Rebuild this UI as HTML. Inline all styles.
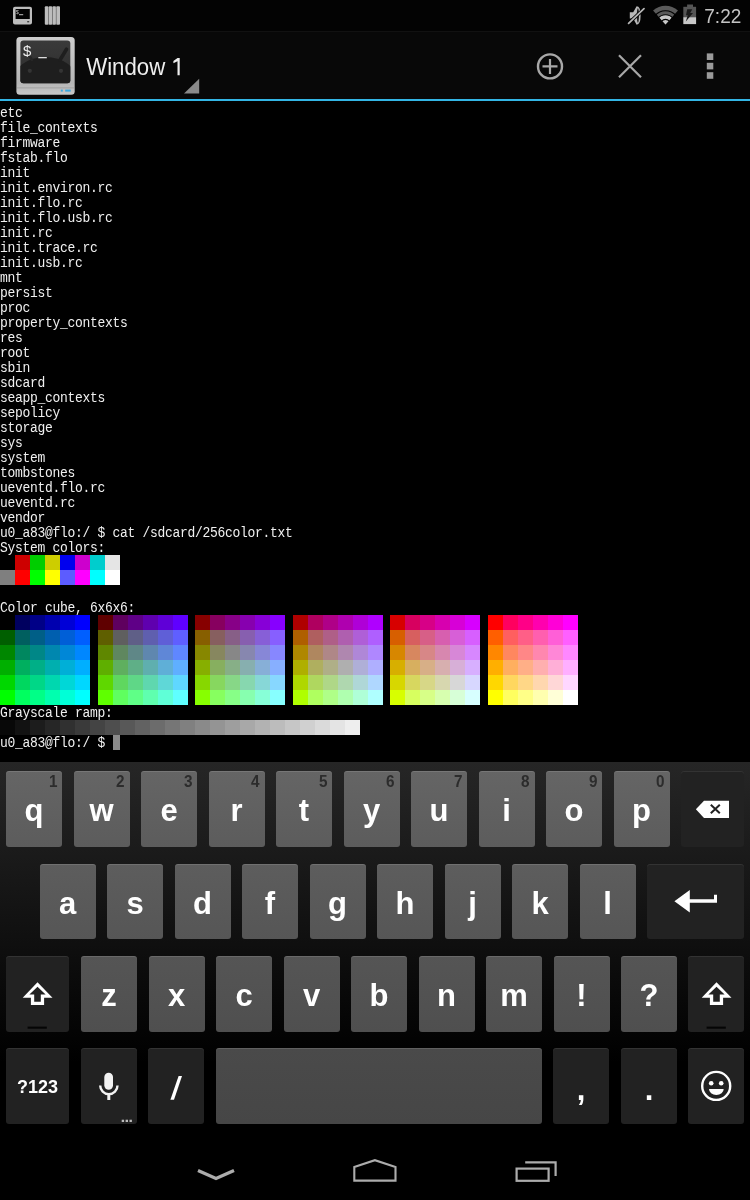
<!DOCTYPE html>
<html><head><meta charset="utf-8"><style>
*{margin:0;padding:0;box-sizing:border-box}
html,body{width:750px;height:1200px;background:#000;overflow:hidden;position:relative}
body{will-change:transform}
body{font-family:"Liberation Sans",sans-serif}
.a{position:absolute}
svg{position:absolute;overflow:visible}
.t{position:absolute;left:0;font-family:"Liberation Mono",monospace;font-size:13px;letter-spacing:-0.3px;line-height:15px;height:15px;color:#f0f0f0;white-space:pre;transform:scaleY(1.08);transform-origin:0 10.5px}
.c{position:absolute;width:15px;height:15px}
.k{position:absolute;border-radius:3px;box-shadow:inset 0 1px 0 rgba(255,255,255,0.12)}
.f{position:absolute;border-radius:3px;background:#222;box-shadow:inset 0 1px 0 rgba(255,255,255,0.08)}
.l{position:absolute;left:0;right:0;text-align:center;color:#fff;font-weight:bold;font-size:31px;line-height:1}
.n{position:absolute;right:5px;top:2px;color:#2c2c2c;font-size:17px;font-weight:bold;line-height:1;transform:scaleX(0.9);transform-origin:100% 0}
</style></head><body>
<div class="a" style="left:0;top:0;width:750px;height:31px;background:#030303"></div>
<div class="a" style="left:0;top:32px;width:750px;height:67px;background:#080808"></div>

<svg style="left:0;top:0" width="750" height="32">
 <g fill="#bdbdbd">
  <path fill-rule="evenodd" d="M15 6.8h15a2 2 0 0 1 2 2v13.6a2 2 0 0 1-2 2h-15a2 2 0 0 1-2-2v-13.6a2 2 0 0 1 2-2zM15.6 9v10h14.2v-10z"/>
 </g>
 <rect x="27.2" y="21" width="2" height="1.4" fill="#444"/>
 <text x="15.7" y="13.6" font-family="Liberation Sans" font-size="5.6" fill="#bdbdbd">$</text>
 <rect x="19" y="14.2" width="4.2" height="1" fill="#bdbdbd"/>
 <rect x="0" y="31" width="750" height="1" fill="#111"/>
 <g fill="#bdbdbd">
  <rect x="44.8" y="6.3" width="3.6" height="18.5" rx="1"/>
  <rect x="48.6" y="6.3" width="3.6" height="18.5" rx="1"/>
  <rect x="52.4" y="6.3" width="3.6" height="18.5" rx="1"/>
  <rect x="56.2" y="6.3" width="3.8" height="18.5" rx="1"/>
 </g>
 <g fill="#7a7a7a">
  <rect x="48.2" y="7" width="0.6" height="17.5"/><rect x="52" y="7" width="0.6" height="17.5"/><rect x="55.8" y="7" width="0.6" height="17.5"/>
 </g>
 <!-- mute -->
 <path d="M629.8 12.2H633.2L636.6 6.2Q640.6 6.2 640.6 15.5Q640.6 24.7 636.6 24.7L633.2 18.6H629.8Z" fill="#b8b8b8"/>
 <ellipse cx="637.9" cy="15.5" rx="1.1" ry="7.3" fill="#1c1c1c"/>
 <line x1="628.6" y1="23.3" x2="644" y2="8.7" stroke="#000" stroke-width="3.4"/>
 <line x1="628.6" y1="23.3" x2="644" y2="8.7" stroke="#b5b5b5" stroke-width="1.8" stroke-linecap="round"/>
 <!-- wifi -->
 <path d="M665.5 24.4L653.05 10.58A18.6 18.6 0 0 1 677.95 10.58Z" fill="#5a5a5a"/><path d="M655.01 15.59A13.7 13.7 0 0 1 675.99 15.59" stroke="#000" stroke-width="1.1" fill="none"/><path d="M665.5 24.4L659.08 17.27A9.6 9.6 0 0 1 671.92 17.27Z" fill="#c9c9c9"/><path d="M658.15 18.23A9.6 9.6 0 0 1 672.85 18.23" stroke="#000" stroke-width="1.1" fill="none"/><path d="M661.67 21.19A5.0 5.0 0 0 1 669.33 21.19" stroke="#000" stroke-width="1.1" fill="none"/>
 <!-- battery -->
 <rect x="687.1" y="4.5" width="5.9" height="2.5" fill="#555"/>
 <rect x="683.3" y="6.8" width="12.8" height="10.5" fill="#555"/>
 <rect x="683.3" y="17.2" width="12.8" height="6.9" fill="#c8c8c8"/>
 <path d="M687.2 9.3H692.3L690.2 13H693L685.8 21.6L687.8 15.2H686Z" fill="#1a1a1a"/>
 <text x="704.3" y="22.8" font-family="Liberation Sans" font-size="20.5" fill="#c4c4c4" textLength="37" lengthAdjust="spacingAndGlyphs">7:22</text>
</svg>


<svg style="left:0;top:32px" width="220" height="67" viewBox="0 32 220 67">
 <defs>
  <linearGradient id="bz" x1="0" y1="0" x2="0" y2="1"><stop offset="0" stop-color="#cfcfcf"/><stop offset="0.8" stop-color="#b5b5b5"/><stop offset="1" stop-color="#c8c8c8"/></linearGradient>
  <linearGradient id="sc" x1="0" y1="0" x2="0" y2="1"><stop offset="0" stop-color="#3a3a3a"/><stop offset="1" stop-color="#2c2c2c"/></linearGradient>
 </defs>
 <rect x="16.4" y="36.9" width="58.3" height="57.8" rx="3.5" fill="url(#bz)"/>
 <clipPath id="scr"><rect x="20.4" y="40.5" width="49.9" height="42.7" rx="3"/></clipPath>
 <rect x="20.4" y="40.5" width="49.9" height="42.7" rx="3" fill="url(#sc)"/>
 <g clip-path="url(#scr)">
  <ellipse cx="45.3" cy="81" rx="32" ry="24" fill="#1e1e1e"/>
  <path d="M66.5 49.2L60 60" stroke="#1e1e1e" stroke-width="3.6" stroke-linecap="round"/>
  <path d="M27 52L32 60" stroke="#262626" stroke-width="2.5" stroke-linecap="round"/>
  <circle cx="29.8" cy="70.8" r="2.1" fill="#343434"/>
  <circle cx="61" cy="70.8" r="2.1" fill="#343434"/>
 </g>
 <text x="23" y="55.5" font-family="Liberation Sans" font-size="15" fill="#eee">$</text>
 <rect x="38.3" y="57" width="8.5" height="1.3" fill="#ddd"/>
 <rect x="17" y="87.5" width="57" height="0.8" fill="#9a9a9a"/>
 <rect x="60.8" y="89.6" width="2" height="2" fill="#39a7e0"/>
 <rect x="65.2" y="89.6" width="5.5" height="2" fill="#39a7e0"/>
 <text x="86.2" y="75.3" font-family="Liberation Sans" font-size="23.5" fill="#eeeeee" textLength="79" lengthAdjust="spacingAndGlyphs">Window</text>
 <path d="M177.5 58H179.7V75.3H177.5V61.2L173.4 63.2V61Z" fill="#eeeeee"/>
 <path d="M199.2 78.8V93.5H184Z" fill="#8a8a8a"/>
</svg>


<svg style="left:0;top:32px" width="750" height="67" viewBox="0 32 750 67">
 <circle cx="550" cy="66.4" r="12" stroke="#a8a8a8" stroke-width="2.4" fill="none"/>
 <path d="M542.5 66.4h15M550 58.9v15" stroke="#a8a8a8" stroke-width="2.2"/>
 <path d="M619 55.2L641 77.2M641 55.2L619 77.2" stroke="#a8a8a8" stroke-width="2.2"/>
 <rect x="706.8" y="53.4" width="6.5" height="6.6" fill="#9a9a9a"/>
 <rect x="706.8" y="62.8" width="6.5" height="6.6" fill="#9a9a9a"/>
 <rect x="706.8" y="72.2" width="6.5" height="6.6" fill="#9a9a9a"/>
</svg>

<div class="a" style="left:0;top:99px;width:750px;height:2px;background:#33b5e5"></div>
<div class="t" style="top:106px">etc</div><div class="t" style="top:121px">file_contexts</div><div class="t" style="top:136px">firmware</div><div class="t" style="top:151px">fstab.flo</div><div class="t" style="top:166px">init</div><div class="t" style="top:181px">init.environ.rc</div><div class="t" style="top:196px">init.flo.rc</div><div class="t" style="top:211px">init.flo.usb.rc</div><div class="t" style="top:226px">init.rc</div><div class="t" style="top:241px">init.trace.rc</div><div class="t" style="top:256px">init.usb.rc</div><div class="t" style="top:271px">mnt</div><div class="t" style="top:286px">persist</div><div class="t" style="top:301px">proc</div><div class="t" style="top:316px">property_contexts</div><div class="t" style="top:331px">res</div><div class="t" style="top:346px">root</div><div class="t" style="top:361px">sbin</div><div class="t" style="top:376px">sdcard</div><div class="t" style="top:391px">seapp_contexts</div><div class="t" style="top:406px">sepolicy</div><div class="t" style="top:421px">storage</div><div class="t" style="top:436px">sys</div><div class="t" style="top:451px">system</div><div class="t" style="top:466px">tombstones</div><div class="t" style="top:481px">ueventd.flo.rc</div><div class="t" style="top:496px">ueventd.rc</div><div class="t" style="top:511px">vendor</div><div class="t" style="top:526px">u0_a83@flo:/ $ cat /sdcard/256color.txt</div><div class="t" style="top:541px">System colors:</div><div class="t" style="top:601px">Color cube, 6x6x6:</div><div class="t" style="top:706px">Grayscale ramp:</div><div class="t" style="top:736px">u0_a83@flo:/ $ </div><div class="c" style="left:0px;top:555px;background:#000000"></div><div class="c" style="left:15px;top:555px;background:#cd0000"></div><div class="c" style="left:30px;top:555px;background:#00cd00"></div><div class="c" style="left:45px;top:555px;background:#cdcd00"></div><div class="c" style="left:60px;top:555px;background:#0000ee"></div><div class="c" style="left:75px;top:555px;background:#cd00cd"></div><div class="c" style="left:90px;top:555px;background:#00cdcd"></div><div class="c" style="left:105px;top:555px;background:#e5e5e5"></div><div class="c" style="left:0px;top:570px;background:#7f7f7f"></div><div class="c" style="left:15px;top:570px;background:#ff0000"></div><div class="c" style="left:30px;top:570px;background:#00ff00"></div><div class="c" style="left:45px;top:570px;background:#ffff00"></div><div class="c" style="left:60px;top:570px;background:#5c5cff"></div><div class="c" style="left:75px;top:570px;background:#ff00ff"></div><div class="c" style="left:90px;top:570px;background:#00ffff"></div><div class="c" style="left:105px;top:570px;background:#ffffff"></div><div class="c" style="left:0.0px;top:615px;background:#000000"></div><div class="c" style="left:15.0px;top:615px;background:#00005f"></div><div class="c" style="left:30.0px;top:615px;background:#000087"></div><div class="c" style="left:45.0px;top:615px;background:#0000af"></div><div class="c" style="left:60.0px;top:615px;background:#0000d7"></div><div class="c" style="left:75.0px;top:615px;background:#0000ff"></div><div class="c" style="left:97.5px;top:615px;background:#5f0000"></div><div class="c" style="left:112.5px;top:615px;background:#5f005f"></div><div class="c" style="left:127.5px;top:615px;background:#5f0087"></div><div class="c" style="left:142.5px;top:615px;background:#5f00af"></div><div class="c" style="left:157.5px;top:615px;background:#5f00d7"></div><div class="c" style="left:172.5px;top:615px;background:#5f00ff"></div><div class="c" style="left:195.0px;top:615px;background:#870000"></div><div class="c" style="left:210.0px;top:615px;background:#87005f"></div><div class="c" style="left:225.0px;top:615px;background:#870087"></div><div class="c" style="left:240.0px;top:615px;background:#8700af"></div><div class="c" style="left:255.0px;top:615px;background:#8700d7"></div><div class="c" style="left:270.0px;top:615px;background:#8700ff"></div><div class="c" style="left:292.5px;top:615px;background:#af0000"></div><div class="c" style="left:307.5px;top:615px;background:#af005f"></div><div class="c" style="left:322.5px;top:615px;background:#af0087"></div><div class="c" style="left:337.5px;top:615px;background:#af00af"></div><div class="c" style="left:352.5px;top:615px;background:#af00d7"></div><div class="c" style="left:367.5px;top:615px;background:#af00ff"></div><div class="c" style="left:390.0px;top:615px;background:#d70000"></div><div class="c" style="left:405.0px;top:615px;background:#d7005f"></div><div class="c" style="left:420.0px;top:615px;background:#d70087"></div><div class="c" style="left:435.0px;top:615px;background:#d700af"></div><div class="c" style="left:450.0px;top:615px;background:#d700d7"></div><div class="c" style="left:465.0px;top:615px;background:#d700ff"></div><div class="c" style="left:487.5px;top:615px;background:#ff0000"></div><div class="c" style="left:502.5px;top:615px;background:#ff005f"></div><div class="c" style="left:517.5px;top:615px;background:#ff0087"></div><div class="c" style="left:532.5px;top:615px;background:#ff00af"></div><div class="c" style="left:547.5px;top:615px;background:#ff00d7"></div><div class="c" style="left:562.5px;top:615px;background:#ff00ff"></div><div class="c" style="left:0.0px;top:630px;background:#005f00"></div><div class="c" style="left:15.0px;top:630px;background:#005f5f"></div><div class="c" style="left:30.0px;top:630px;background:#005f87"></div><div class="c" style="left:45.0px;top:630px;background:#005faf"></div><div class="c" style="left:60.0px;top:630px;background:#005fd7"></div><div class="c" style="left:75.0px;top:630px;background:#005fff"></div><div class="c" style="left:97.5px;top:630px;background:#5f5f00"></div><div class="c" style="left:112.5px;top:630px;background:#5f5f5f"></div><div class="c" style="left:127.5px;top:630px;background:#5f5f87"></div><div class="c" style="left:142.5px;top:630px;background:#5f5faf"></div><div class="c" style="left:157.5px;top:630px;background:#5f5fd7"></div><div class="c" style="left:172.5px;top:630px;background:#5f5fff"></div><div class="c" style="left:195.0px;top:630px;background:#875f00"></div><div class="c" style="left:210.0px;top:630px;background:#875f5f"></div><div class="c" style="left:225.0px;top:630px;background:#875f87"></div><div class="c" style="left:240.0px;top:630px;background:#875faf"></div><div class="c" style="left:255.0px;top:630px;background:#875fd7"></div><div class="c" style="left:270.0px;top:630px;background:#875fff"></div><div class="c" style="left:292.5px;top:630px;background:#af5f00"></div><div class="c" style="left:307.5px;top:630px;background:#af5f5f"></div><div class="c" style="left:322.5px;top:630px;background:#af5f87"></div><div class="c" style="left:337.5px;top:630px;background:#af5faf"></div><div class="c" style="left:352.5px;top:630px;background:#af5fd7"></div><div class="c" style="left:367.5px;top:630px;background:#af5fff"></div><div class="c" style="left:390.0px;top:630px;background:#d75f00"></div><div class="c" style="left:405.0px;top:630px;background:#d75f5f"></div><div class="c" style="left:420.0px;top:630px;background:#d75f87"></div><div class="c" style="left:435.0px;top:630px;background:#d75faf"></div><div class="c" style="left:450.0px;top:630px;background:#d75fd7"></div><div class="c" style="left:465.0px;top:630px;background:#d75fff"></div><div class="c" style="left:487.5px;top:630px;background:#ff5f00"></div><div class="c" style="left:502.5px;top:630px;background:#ff5f5f"></div><div class="c" style="left:517.5px;top:630px;background:#ff5f87"></div><div class="c" style="left:532.5px;top:630px;background:#ff5faf"></div><div class="c" style="left:547.5px;top:630px;background:#ff5fd7"></div><div class="c" style="left:562.5px;top:630px;background:#ff5fff"></div><div class="c" style="left:0.0px;top:645px;background:#008700"></div><div class="c" style="left:15.0px;top:645px;background:#00875f"></div><div class="c" style="left:30.0px;top:645px;background:#008787"></div><div class="c" style="left:45.0px;top:645px;background:#0087af"></div><div class="c" style="left:60.0px;top:645px;background:#0087d7"></div><div class="c" style="left:75.0px;top:645px;background:#0087ff"></div><div class="c" style="left:97.5px;top:645px;background:#5f8700"></div><div class="c" style="left:112.5px;top:645px;background:#5f875f"></div><div class="c" style="left:127.5px;top:645px;background:#5f8787"></div><div class="c" style="left:142.5px;top:645px;background:#5f87af"></div><div class="c" style="left:157.5px;top:645px;background:#5f87d7"></div><div class="c" style="left:172.5px;top:645px;background:#5f87ff"></div><div class="c" style="left:195.0px;top:645px;background:#878700"></div><div class="c" style="left:210.0px;top:645px;background:#87875f"></div><div class="c" style="left:225.0px;top:645px;background:#878787"></div><div class="c" style="left:240.0px;top:645px;background:#8787af"></div><div class="c" style="left:255.0px;top:645px;background:#8787d7"></div><div class="c" style="left:270.0px;top:645px;background:#8787ff"></div><div class="c" style="left:292.5px;top:645px;background:#af8700"></div><div class="c" style="left:307.5px;top:645px;background:#af875f"></div><div class="c" style="left:322.5px;top:645px;background:#af8787"></div><div class="c" style="left:337.5px;top:645px;background:#af87af"></div><div class="c" style="left:352.5px;top:645px;background:#af87d7"></div><div class="c" style="left:367.5px;top:645px;background:#af87ff"></div><div class="c" style="left:390.0px;top:645px;background:#d78700"></div><div class="c" style="left:405.0px;top:645px;background:#d7875f"></div><div class="c" style="left:420.0px;top:645px;background:#d78787"></div><div class="c" style="left:435.0px;top:645px;background:#d787af"></div><div class="c" style="left:450.0px;top:645px;background:#d787d7"></div><div class="c" style="left:465.0px;top:645px;background:#d787ff"></div><div class="c" style="left:487.5px;top:645px;background:#ff8700"></div><div class="c" style="left:502.5px;top:645px;background:#ff875f"></div><div class="c" style="left:517.5px;top:645px;background:#ff8787"></div><div class="c" style="left:532.5px;top:645px;background:#ff87af"></div><div class="c" style="left:547.5px;top:645px;background:#ff87d7"></div><div class="c" style="left:562.5px;top:645px;background:#ff87ff"></div><div class="c" style="left:0.0px;top:660px;background:#00af00"></div><div class="c" style="left:15.0px;top:660px;background:#00af5f"></div><div class="c" style="left:30.0px;top:660px;background:#00af87"></div><div class="c" style="left:45.0px;top:660px;background:#00afaf"></div><div class="c" style="left:60.0px;top:660px;background:#00afd7"></div><div class="c" style="left:75.0px;top:660px;background:#00afff"></div><div class="c" style="left:97.5px;top:660px;background:#5faf00"></div><div class="c" style="left:112.5px;top:660px;background:#5faf5f"></div><div class="c" style="left:127.5px;top:660px;background:#5faf87"></div><div class="c" style="left:142.5px;top:660px;background:#5fafaf"></div><div class="c" style="left:157.5px;top:660px;background:#5fafd7"></div><div class="c" style="left:172.5px;top:660px;background:#5fafff"></div><div class="c" style="left:195.0px;top:660px;background:#87af00"></div><div class="c" style="left:210.0px;top:660px;background:#87af5f"></div><div class="c" style="left:225.0px;top:660px;background:#87af87"></div><div class="c" style="left:240.0px;top:660px;background:#87afaf"></div><div class="c" style="left:255.0px;top:660px;background:#87afd7"></div><div class="c" style="left:270.0px;top:660px;background:#87afff"></div><div class="c" style="left:292.5px;top:660px;background:#afaf00"></div><div class="c" style="left:307.5px;top:660px;background:#afaf5f"></div><div class="c" style="left:322.5px;top:660px;background:#afaf87"></div><div class="c" style="left:337.5px;top:660px;background:#afafaf"></div><div class="c" style="left:352.5px;top:660px;background:#afafd7"></div><div class="c" style="left:367.5px;top:660px;background:#afafff"></div><div class="c" style="left:390.0px;top:660px;background:#d7af00"></div><div class="c" style="left:405.0px;top:660px;background:#d7af5f"></div><div class="c" style="left:420.0px;top:660px;background:#d7af87"></div><div class="c" style="left:435.0px;top:660px;background:#d7afaf"></div><div class="c" style="left:450.0px;top:660px;background:#d7afd7"></div><div class="c" style="left:465.0px;top:660px;background:#d7afff"></div><div class="c" style="left:487.5px;top:660px;background:#ffaf00"></div><div class="c" style="left:502.5px;top:660px;background:#ffaf5f"></div><div class="c" style="left:517.5px;top:660px;background:#ffaf87"></div><div class="c" style="left:532.5px;top:660px;background:#ffafaf"></div><div class="c" style="left:547.5px;top:660px;background:#ffafd7"></div><div class="c" style="left:562.5px;top:660px;background:#ffafff"></div><div class="c" style="left:0.0px;top:675px;background:#00d700"></div><div class="c" style="left:15.0px;top:675px;background:#00d75f"></div><div class="c" style="left:30.0px;top:675px;background:#00d787"></div><div class="c" style="left:45.0px;top:675px;background:#00d7af"></div><div class="c" style="left:60.0px;top:675px;background:#00d7d7"></div><div class="c" style="left:75.0px;top:675px;background:#00d7ff"></div><div class="c" style="left:97.5px;top:675px;background:#5fd700"></div><div class="c" style="left:112.5px;top:675px;background:#5fd75f"></div><div class="c" style="left:127.5px;top:675px;background:#5fd787"></div><div class="c" style="left:142.5px;top:675px;background:#5fd7af"></div><div class="c" style="left:157.5px;top:675px;background:#5fd7d7"></div><div class="c" style="left:172.5px;top:675px;background:#5fd7ff"></div><div class="c" style="left:195.0px;top:675px;background:#87d700"></div><div class="c" style="left:210.0px;top:675px;background:#87d75f"></div><div class="c" style="left:225.0px;top:675px;background:#87d787"></div><div class="c" style="left:240.0px;top:675px;background:#87d7af"></div><div class="c" style="left:255.0px;top:675px;background:#87d7d7"></div><div class="c" style="left:270.0px;top:675px;background:#87d7ff"></div><div class="c" style="left:292.5px;top:675px;background:#afd700"></div><div class="c" style="left:307.5px;top:675px;background:#afd75f"></div><div class="c" style="left:322.5px;top:675px;background:#afd787"></div><div class="c" style="left:337.5px;top:675px;background:#afd7af"></div><div class="c" style="left:352.5px;top:675px;background:#afd7d7"></div><div class="c" style="left:367.5px;top:675px;background:#afd7ff"></div><div class="c" style="left:390.0px;top:675px;background:#d7d700"></div><div class="c" style="left:405.0px;top:675px;background:#d7d75f"></div><div class="c" style="left:420.0px;top:675px;background:#d7d787"></div><div class="c" style="left:435.0px;top:675px;background:#d7d7af"></div><div class="c" style="left:450.0px;top:675px;background:#d7d7d7"></div><div class="c" style="left:465.0px;top:675px;background:#d7d7ff"></div><div class="c" style="left:487.5px;top:675px;background:#ffd700"></div><div class="c" style="left:502.5px;top:675px;background:#ffd75f"></div><div class="c" style="left:517.5px;top:675px;background:#ffd787"></div><div class="c" style="left:532.5px;top:675px;background:#ffd7af"></div><div class="c" style="left:547.5px;top:675px;background:#ffd7d7"></div><div class="c" style="left:562.5px;top:675px;background:#ffd7ff"></div><div class="c" style="left:0.0px;top:690px;background:#00ff00"></div><div class="c" style="left:15.0px;top:690px;background:#00ff5f"></div><div class="c" style="left:30.0px;top:690px;background:#00ff87"></div><div class="c" style="left:45.0px;top:690px;background:#00ffaf"></div><div class="c" style="left:60.0px;top:690px;background:#00ffd7"></div><div class="c" style="left:75.0px;top:690px;background:#00ffff"></div><div class="c" style="left:97.5px;top:690px;background:#5fff00"></div><div class="c" style="left:112.5px;top:690px;background:#5fff5f"></div><div class="c" style="left:127.5px;top:690px;background:#5fff87"></div><div class="c" style="left:142.5px;top:690px;background:#5fffaf"></div><div class="c" style="left:157.5px;top:690px;background:#5fffd7"></div><div class="c" style="left:172.5px;top:690px;background:#5fffff"></div><div class="c" style="left:195.0px;top:690px;background:#87ff00"></div><div class="c" style="left:210.0px;top:690px;background:#87ff5f"></div><div class="c" style="left:225.0px;top:690px;background:#87ff87"></div><div class="c" style="left:240.0px;top:690px;background:#87ffaf"></div><div class="c" style="left:255.0px;top:690px;background:#87ffd7"></div><div class="c" style="left:270.0px;top:690px;background:#87ffff"></div><div class="c" style="left:292.5px;top:690px;background:#afff00"></div><div class="c" style="left:307.5px;top:690px;background:#afff5f"></div><div class="c" style="left:322.5px;top:690px;background:#afff87"></div><div class="c" style="left:337.5px;top:690px;background:#afffaf"></div><div class="c" style="left:352.5px;top:690px;background:#afffd7"></div><div class="c" style="left:367.5px;top:690px;background:#afffff"></div><div class="c" style="left:390.0px;top:690px;background:#d7ff00"></div><div class="c" style="left:405.0px;top:690px;background:#d7ff5f"></div><div class="c" style="left:420.0px;top:690px;background:#d7ff87"></div><div class="c" style="left:435.0px;top:690px;background:#d7ffaf"></div><div class="c" style="left:450.0px;top:690px;background:#d7ffd7"></div><div class="c" style="left:465.0px;top:690px;background:#d7ffff"></div><div class="c" style="left:487.5px;top:690px;background:#ffff00"></div><div class="c" style="left:502.5px;top:690px;background:#ffff5f"></div><div class="c" style="left:517.5px;top:690px;background:#ffff87"></div><div class="c" style="left:532.5px;top:690px;background:#ffffaf"></div><div class="c" style="left:547.5px;top:690px;background:#ffffd7"></div><div class="c" style="left:562.5px;top:690px;background:#ffffff"></div><div class="c" style="left:0px;top:720px;background:#080808"></div><div class="c" style="left:15px;top:720px;background:#121212"></div><div class="c" style="left:30px;top:720px;background:#1c1c1c"></div><div class="c" style="left:45px;top:720px;background:#262626"></div><div class="c" style="left:60px;top:720px;background:#303030"></div><div class="c" style="left:75px;top:720px;background:#3a3a3a"></div><div class="c" style="left:90px;top:720px;background:#444444"></div><div class="c" style="left:105px;top:720px;background:#4e4e4e"></div><div class="c" style="left:120px;top:720px;background:#585858"></div><div class="c" style="left:135px;top:720px;background:#626262"></div><div class="c" style="left:150px;top:720px;background:#6c6c6c"></div><div class="c" style="left:165px;top:720px;background:#767676"></div><div class="c" style="left:180px;top:720px;background:#808080"></div><div class="c" style="left:195px;top:720px;background:#8a8a8a"></div><div class="c" style="left:210px;top:720px;background:#949494"></div><div class="c" style="left:225px;top:720px;background:#9e9e9e"></div><div class="c" style="left:240px;top:720px;background:#a8a8a8"></div><div class="c" style="left:255px;top:720px;background:#b2b2b2"></div><div class="c" style="left:270px;top:720px;background:#bcbcbc"></div><div class="c" style="left:285px;top:720px;background:#c6c6c6"></div><div class="c" style="left:300px;top:720px;background:#d0d0d0"></div><div class="c" style="left:315px;top:720px;background:#dadada"></div><div class="c" style="left:330px;top:720px;background:#e4e4e4"></div><div class="c" style="left:345px;top:720px;background:#eeeeee"></div><div class="a" style="left:112.5px;top:735px;width:7.5px;height:15px;background:#8a8a8a"></div>
<div class="a" style="left:0;top:762px;width:750px;height:376px;background:linear-gradient(#262626,#000 80%)"></div>
<div class="k" style="left:6.0px;top:771px;width:56px;height:75.5px;background:linear-gradient(#656565,#5c5c5c)"><div class="n">1</div><div class="l" style="top:24px">q</div></div><div class="k" style="left:73.5px;top:771px;width:56px;height:75.5px;background:linear-gradient(#656565,#5c5c5c)"><div class="n">2</div><div class="l" style="top:24px">w</div></div><div class="k" style="left:141.0px;top:771px;width:56px;height:75.5px;background:linear-gradient(#656565,#5c5c5c)"><div class="n">3</div><div class="l" style="top:24px">e</div></div><div class="k" style="left:208.5px;top:771px;width:56px;height:75.5px;background:linear-gradient(#656565,#5c5c5c)"><div class="n">4</div><div class="l" style="top:24px">r</div></div><div class="k" style="left:276.0px;top:771px;width:56px;height:75.5px;background:linear-gradient(#656565,#5c5c5c)"><div class="n">5</div><div class="l" style="top:24px">t</div></div><div class="k" style="left:343.5px;top:771px;width:56px;height:75.5px;background:linear-gradient(#656565,#5c5c5c)"><div class="n">6</div><div class="l" style="top:24px">y</div></div><div class="k" style="left:411.0px;top:771px;width:56px;height:75.5px;background:linear-gradient(#656565,#5c5c5c)"><div class="n">7</div><div class="l" style="top:24px">u</div></div><div class="k" style="left:478.5px;top:771px;width:56px;height:75.5px;background:linear-gradient(#656565,#5c5c5c)"><div class="n">8</div><div class="l" style="top:24px">i</div></div><div class="k" style="left:546.0px;top:771px;width:56px;height:75.5px;background:linear-gradient(#656565,#5c5c5c)"><div class="n">9</div><div class="l" style="top:24px">o</div></div><div class="k" style="left:613.5px;top:771px;width:56px;height:75.5px;background:linear-gradient(#656565,#5c5c5c)"><div class="n">0</div><div class="l" style="top:24px">p</div></div><div class="f" style="left:681px;top:771px;width:63px;height:75.5px"></div><div class="k" style="left:39.5px;top:863.5px;width:56px;height:75.5px;background:linear-gradient(#5d5d5d,#565656)"><div class="l" style="top:24px">a</div></div><div class="k" style="left:107.0px;top:863.5px;width:56px;height:75.5px;background:linear-gradient(#5d5d5d,#565656)"><div class="l" style="top:24px">s</div></div><div class="k" style="left:174.5px;top:863.5px;width:56px;height:75.5px;background:linear-gradient(#5d5d5d,#565656)"><div class="l" style="top:24px">d</div></div><div class="k" style="left:242.0px;top:863.5px;width:56px;height:75.5px;background:linear-gradient(#5d5d5d,#565656)"><div class="l" style="top:24px">f</div></div><div class="k" style="left:309.5px;top:863.5px;width:56px;height:75.5px;background:linear-gradient(#5d5d5d,#565656)"><div class="l" style="top:24px">g</div></div><div class="k" style="left:377.0px;top:863.5px;width:56px;height:75.5px;background:linear-gradient(#5d5d5d,#565656)"><div class="l" style="top:24px">h</div></div><div class="k" style="left:444.5px;top:863.5px;width:56px;height:75.5px;background:linear-gradient(#5d5d5d,#565656)"><div class="l" style="top:24px">j</div></div><div class="k" style="left:512.0px;top:863.5px;width:56px;height:75.5px;background:linear-gradient(#5d5d5d,#565656)"><div class="l" style="top:24px">k</div></div><div class="k" style="left:579.5px;top:863.5px;width:56px;height:75.5px;background:linear-gradient(#5d5d5d,#565656)"><div class="l" style="top:24px">l</div></div><div class="f" style="left:647px;top:863.5px;width:97px;height:75.5px"></div><div class="f" style="left:6px;top:956px;width:63px;height:75.5px"></div><div class="k" style="left:81.0px;top:956px;width:56px;height:75.5px;background:linear-gradient(#555555,#4f4f4f)"><div class="l" style="top:24px">z</div></div><div class="k" style="left:148.5px;top:956px;width:56px;height:75.5px;background:linear-gradient(#555555,#4f4f4f)"><div class="l" style="top:24px">x</div></div><div class="k" style="left:216.0px;top:956px;width:56px;height:75.5px;background:linear-gradient(#555555,#4f4f4f)"><div class="l" style="top:24px">c</div></div><div class="k" style="left:283.5px;top:956px;width:56px;height:75.5px;background:linear-gradient(#555555,#4f4f4f)"><div class="l" style="top:24px">v</div></div><div class="k" style="left:351.0px;top:956px;width:56px;height:75.5px;background:linear-gradient(#555555,#4f4f4f)"><div class="l" style="top:24px">b</div></div><div class="k" style="left:418.5px;top:956px;width:56px;height:75.5px;background:linear-gradient(#555555,#4f4f4f)"><div class="l" style="top:24px">n</div></div><div class="k" style="left:486.0px;top:956px;width:56px;height:75.5px;background:linear-gradient(#555555,#4f4f4f)"><div class="l" style="top:24px">m</div></div><div class="k" style="left:553.5px;top:956px;width:56px;height:75.5px;background:linear-gradient(#555555,#4f4f4f)"><div class="l" style="top:24px">!</div></div><div class="k" style="left:621.0px;top:956px;width:56px;height:75.5px;background:linear-gradient(#555555,#4f4f4f)"><div class="l" style="top:24px">?</div></div><div class="f" style="left:688px;top:956px;width:56px;height:75.5px"></div><div class="f" style="left:6px;top:1048px;width:63px;height:75.5px"><div class="l" style="top:30px;font-size:18px">?123</div></div><div class="f" style="left:81px;top:1048px;width:56px;height:75.5px"></div><div class="f" style="left:148px;top:1048px;width:56px;height:75.5px"></div><div class="k" style="left:216px;top:1048px;width:326px;height:75.5px;background:linear-gradient(#4a4a4a,#464646)"></div><div class="f" style="left:553px;top:1048px;width:56px;height:75.5px"><div class="l" style="top:26px">,</div></div><div class="f" style="left:621px;top:1048px;width:56px;height:75.5px"><div class="l" style="top:26px">.</div></div><div class="f" style="left:688px;top:1048px;width:56px;height:75.5px"></div>

<svg style="left:0;top:762px" width="750" height="376" viewBox="0 762 750 376">
 <path d="M178.6 1076H182L174 1099.8H170.4Z" fill="#fff"/>
 <path d="M695.9 809.3L704 800.8H729V817.9H704Z" fill="#fff"/>
 <path d="M710.8 804.8L719.8 813.2M719.8 804.8L710.8 813.2" stroke="#222" stroke-width="2"/>
 <path d="M674.4 901.2L689.8 890V899.2H714V894.8H717V902.8H689.8V912.4Z" fill="#fff"/>
 <path d="M37.5 982.2L52.5 997.8H44.1V1005H30.9V997.8H22.7Z M37.5 986.7L29.4 994.5H34.2V1001.7H40.8V994.5H45.6Z" fill="#fff" fill-rule="evenodd"/>
 <rect x="27.6" y="1026.6" width="19.2" height="2.1" fill="#050505"/>
 <path d="M716.5 982.2L731.5 997.8H723.1V1005H709.9V997.8H701.7Z M716.5 986.7L708.4 994.5H713.2V1001.7H719.8V994.5H724.6Z" fill="#fff" fill-rule="evenodd"/>
 <rect x="706.6" y="1026.6" width="19.2" height="2.1" fill="#050505"/>
 <rect x="104.3" y="1072.7" width="8.7" height="17" rx="4.35" fill="#f2f2f2"/>
 <path d="M100.2 1085.5A8.45 8.45 0 0 0 117.5 1085.5" stroke="#f2f2f2" stroke-width="2.4" fill="none"/>
 <rect x="107.3" y="1093" width="3" height="7" fill="#f2f2f2"/>
 <rect x="121.7" y="1119.7" width="2.4" height="2.3" fill="#bbb"/>
 <rect x="125.6" y="1119.7" width="2.4" height="2.3" fill="#bbb"/>
 <rect x="129.5" y="1119.7" width="2.4" height="2.3" fill="#bbb"/>
 <circle cx="716.2" cy="1085.9" r="14" stroke="#fff" stroke-width="2.4" fill="none"/>
 <circle cx="711.2" cy="1083.3" r="2.3" fill="#fff"/>
 <circle cx="721.2" cy="1083.3" r="2.3" fill="#fff"/>
 <path d="M709 1089H723.7A7.35 6 0 0 1 709 1089Z" fill="#fff"/>
</svg>


<svg style="left:0;top:1138px" width="750" height="62" viewBox="0 1138 750 62">
 <path d="M198 1170.5L216 1178.5L234 1170.5" stroke="#acacac" stroke-width="3.3" fill="none" stroke-linejoin="miter" stroke-linecap="butt"/>
 <path d="M354.3 1166.9L374.9 1160.2L395.5 1166.9V1180.6H354.3Z" stroke="#acacac" stroke-width="2.1" fill="none"/>
 <path d="M525.2 1162.3H555.6V1176" stroke="#acacac" stroke-width="2.2" fill="none"/>
 <rect x="516.6" y="1168.6" width="32" height="12.2" stroke="#acacac" stroke-width="2.2" fill="none"/>
</svg>

</body></html>
